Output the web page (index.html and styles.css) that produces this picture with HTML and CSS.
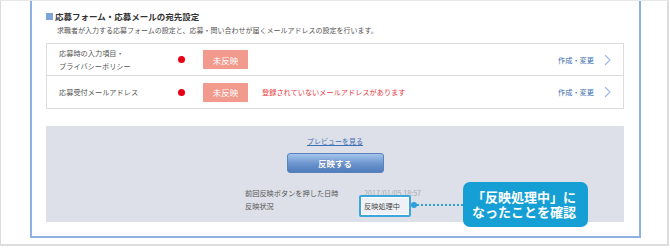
FILE: index.html
```html
<html lang="ja">

<head>
    <meta charset="UTF-8">
    <meta name="viewport" content="width=device-width, initial-scale=1.0">
    <title>応募フォーム・応募メールの宛先設定</title>
    <link rel="stylesheet" href="styles.css">
</head>

<body>
    <div class="frame">
        <div class="panel">
            <h2 class="section-title">応募フォーム・応募メールの宛先設定</h2>
            <p class="section-desc">求職者が入力する応募フォームの設定と、応募・問い合わせが届くメールアドレスの設定を行います。</p>

            <div class="setting-table">
                <div class="setting-row">
                    <div class="setting-label">応募時の入力項目・<br>プライバシーポリシー</div>
                    <span class="dot"></span>
                    <span class="badge">未反映</span>
                    <a class="edit-link" href="#">作成・変更
                        <svg class="chevron" width="7" height="12" viewBox="0 0 7 12"><path d="M1 1 L6 6 L1 11" fill="none" stroke="#9fbbe2" stroke-width="1.2"/></svg>
                    </a>
                </div>
                <div class="setting-row">
                    <div class="setting-label">応募受付メールアドレス</div>
                    <span class="dot"></span>
                    <span class="badge">未反映</span>
                    <span class="warn">登録されていないメールアドレスがあります</span>
                    <a class="edit-link" href="#">作成・変更
                        <svg class="chevron" width="7" height="12" viewBox="0 0 7 12"><path d="M1 1 L6 6 L1 11" fill="none" stroke="#9fbbe2" stroke-width="1.2"/></svg>
                    </a>
                </div>
            </div>

            <div class="publish">
                <a class="preview-link" href="#">プレビューを見る</a>
                <button class="publish-btn" type="button">反映する</button>
                <div class="publish-info">
                    <span class="info-key">前回反映ボタンを押した日時</span>
                    <span class="info-date">2017/01/05 18:57</span>
                    <span class="info-key">反映状況</span>
                    <span class="status">
                        <span class="status-box">反映処理中</span>
                        <span class="note">
                            <span class="note-dot"></span>
                            <span class="note-line"></span>
                            <span class="note-box">「反映処理中」に<br>なったことを確認</span>
                        </span>
                    </span>
                </div>
            </div>
        </div>
    </div>
</body>

</html>
```

FILE: styles.css
```css
body {
    margin: 0;
    background-color: #fff;
    font-family: "Noto Sans CJK JP", "Noto Sans", sans-serif;
    color: #444;
}

.frame {
    width: 669px;
    height: 246px;
    box-sizing: border-box;
    border-top: 1px solid #e8e8e8;
    border-left: 1px solid #dcdcdc;
    border-right: 2px solid #dcdcdc;
    border-bottom: 2px solid #dcdcdc;
}

.panel {
    margin-left: 29px;
    width: 611px;
    height: 237px;
    box-sizing: border-box;
    border-left: 2px solid #8eb0e2;
    border-right: 2px solid #8eb0e2;
    border-bottom: 2px solid #8eb0e2;
    padding: 8px 15px 0 14px;
    display: flex;
    flex-direction: column;
}

.section-title {
    margin: 0;
    display: flex;
    align-items: center;
    gap: 2px;
    font-size: 8.5px;
    line-height: 14px;
    font-weight: bold;
    color: #333;
}

.section-title::before {
    content: "";
    width: 7px;
    height: 7px;
    background-color: #7ea5db;
}

.section-desc {
    margin: 1px 0 7px 11px;
    font-size: 7px;
    line-height: 12px;
    color: #555;
}

.setting-table {
    border: 1px solid #dcdcdc;
}

.setting-row {
    height: 31px;
    display: flex;
    align-items: center;
    padding: 0 12px;
    font-size: 7.2px;
}

.setting-row + .setting-row {
    height: 32px;
    border-top: 1px solid #dcdcdc;
}

.setting-label {
    width: 119px;
    line-height: 13px;
    color: #555;
}

.dot {
    width: 7px;
    height: 7px;
    border-radius: 50%;
    background-color: #e60012;
}

.badge {
    margin-left: 18px;
    width: 45px;
    height: 19px;
    display: flex;
    align-items: center;
    justify-content: center;
    background-color: #f29a8e;
    color: #fff;
    font-size: 8.5px;
}

.warn {
    margin-left: 14px;
    color: #e83a3f;
}

.edit-link {
    margin-left: auto;
    display: flex;
    align-items: center;
    gap: 10px;
    color: #3d6fb3;
    text-decoration: none;
}

.publish {
    margin-top: 17px;
    height: 96px;
    background-color: #dde0e8;
    display: flex;
    flex-direction: column;
    align-items: center;
    padding-top: 10px;
    box-sizing: border-box;
}

.preview-link {
    font-size: 7px;
    line-height: 10px;
    color: #3d6fb3;
    text-decoration: underline;
}

.publish-btn {
    margin-top: 7px;
    width: 97px;
    height: 20px;
    border: 1px solid #5b83ba;
    border-radius: 3px;
    background: linear-gradient(#a4c4ec, #6b94cd 55%, #4f7cbc);
    color: #fff;
    font-family: inherit;
    font-size: 8.5px;
    font-weight: bold;
    text-shadow: 0 0 1px rgba(0, 0, 0, 0.3);
    padding: 0;
}

.publish-info {
    margin-top: 14px;
    align-self: flex-start;
    margin-left: 199px;
    display: grid;
    grid-template-columns: 119px auto;
    font-size: 7.2px;
    line-height: 13px;
    color: #555;
}

.info-date {
    color: #a7abb5;
}

.status {
    position: relative;
}

.status-box {
    display: inline-block;
    margin: -5px 0 0 -5px;
    padding: 3px 9px 3px 3px;
    border: 2px solid #3aa6dc;
    border-radius: 2px;
    background-color: #eef1f6;
    box-shadow: inset 0 0 0 1px #fff;
    line-height: 12px;
    color: #444;
}

.note {
    position: absolute;
    left: 47px;
    top: -18px;
    display: flex;
    align-items: center;
}

.note-dot {
    width: 6px;
    height: 6px;
    border-radius: 50%;
    background-color: #2a9fd8;
}

.note-line {
    width: 46px;
    border-top: 2px dotted #2a9fd8;
}

.note-box {
    width: 125px;
    height: 45px;
    box-sizing: border-box;
    padding: 8px 0 0 9px;
    border-radius: 7px;
    background-color: #159fd5;
    color: #fff;
    font-size: 13px;
    line-height: 14.5px;
    font-weight: bold;
    white-space: nowrap;
}
```
